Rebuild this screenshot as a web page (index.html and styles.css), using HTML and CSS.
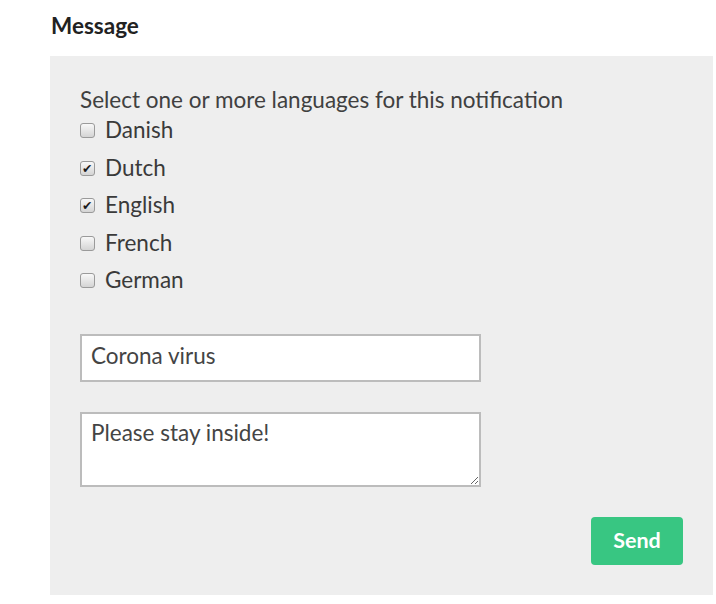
FILE: index.html
```html
<!DOCTYPE html>
<html lang="en">
<head>
<meta charset="utf-8">
<title>Message</title>
<link rel="stylesheet" href="styles.css">
</head>
<body>
<main class="page">
  <h2 class="title">Message</h2>
  <form class="panel">
    <p class="prompt">Select one or more languages for this notification</p>
    <div class="langs">
      <label class="lang"><input type="checkbox" class="cb"><span>Danish</span></label>
      <label class="lang"><input type="checkbox" class="cb" checked><span>Dutch</span></label>
      <label class="lang"><input type="checkbox" class="cb" checked><span>English</span></label>
      <label class="lang"><input type="checkbox" class="cb"><span>French</span></label>
      <label class="lang"><input type="checkbox" class="cb"><span>German</span></label>
    </div>
    <input class="field" type="text" value="Corona virus">
    <textarea class="area">Please stay inside!</textarea>
    <div class="actions">
      <button type="button" class="send">Send</button>
    </div>
  </form>
</main>
</body>
</html>
```
FILE: styles.css
```css
* { box-sizing: border-box; }
html, body { margin: 0; padding: 0; background: #ffffff; }
body {
  font-family: Lato, "Open Sans", sans-serif;
  color: #3a3a3a;
}
.page {
  padding: 0 3px 0 50px;
}
.title {
  margin: 0;
  padding: 11.5px 0 0 1px;
  height: 56px;
  font-size: 22.5px;
  line-height: 28px;
  font-weight: 700;
  color: #222222;
}
.panel {
  background: #eeeeee;
  padding: 32px 30px 30px 30px;
  display: flex;
  flex-direction: column;
}
.prompt {
  margin: 0;
  font-size: 22.5px;
  line-height: 24px;
  color: #404040;
}
.langs {
  display: flex;
  flex-direction: column;
  gap: 13.5px;
  margin-top: 6px;
}
.lang {
  display: flex;
  align-items: center;
  font-size: 22.5px;
  line-height: 24px;
  color: #3a3a3a;
}
.cb {
  -webkit-appearance: none;
  appearance: none;
  width: 15px;
  height: 15px;
  margin: 1px 10px 0 0;
  border: 1px solid #9a9a9a;
  border-radius: 3px;
  background: linear-gradient(#f8f8f8, #d4d4d4);
  position: relative;
  flex: none;
}
.cb:checked::after {
  content: "\2714";
  position: absolute;
  left: 1px;
  top: 0;
  font-family: "DejaVu Sans", sans-serif;
  font-size: 12.5px;
  line-height: 13px;
  color: #1a1a1a;
}
.field, .area {
  width: 401px;
  border: 2px solid #bcbcbc;
  background: #ffffff;
  font-family: Lato, "Open Sans", sans-serif;
  font-size: 22.5px;
  color: #444444;
  padding: 0 9px;
  border-radius: 0;
  outline: none;
}
.field {
  margin-top: 42px;
  height: 48px;
  line-height: 24px;
  padding-bottom: 5px;
}
.area {
  margin-top: 30px;
  height: 75px;
  padding-top: 7px;
  line-height: 24px;
  resize: vertical;
}
.actions {
  display: flex;
  justify-content: flex-end;
  margin-top: 30px;
}
.send {
  width: 92px;
  height: 48px;
  border: none;
  border-radius: 4px;
  background: #38c682;
  color: #ffffff;
  font-family: Lato, "Open Sans", sans-serif;
  font-size: 21.5px;
  font-weight: 700;
  padding: 0 0 2px 0;
}
```
